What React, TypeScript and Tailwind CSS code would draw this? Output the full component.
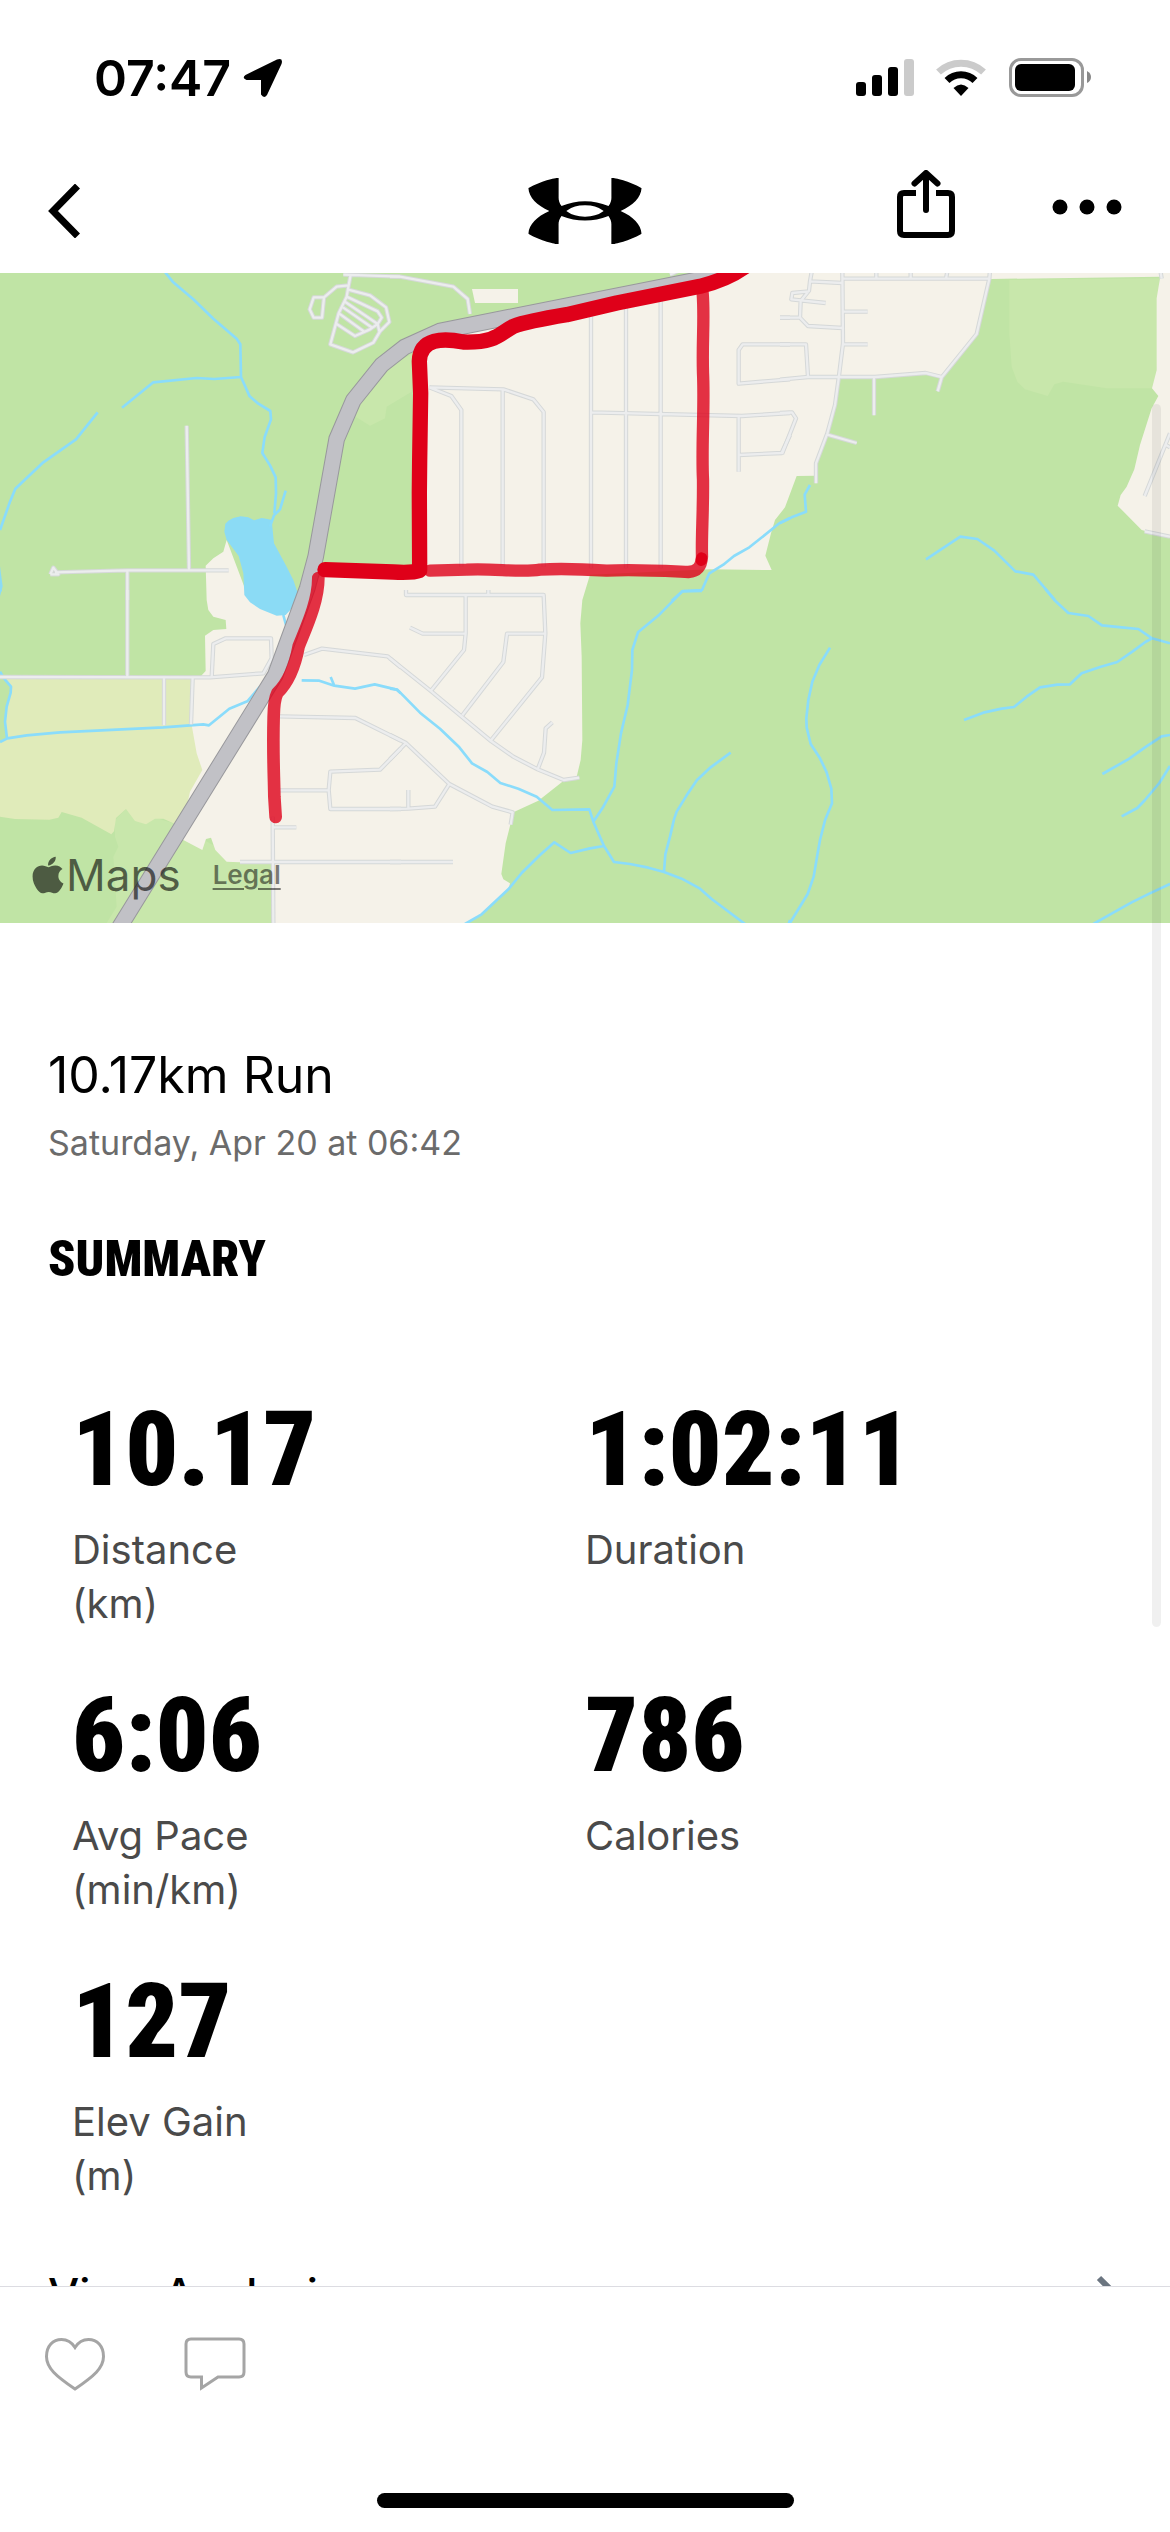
import { SiUnderarmour } from 'react-icons/si'
import { FaApple } from 'react-icons/fa'

const stats = [
  { value: '10.17', label: 'Distance', unit: '(km)' },
  { value: '1:02:11', label: 'Duration' },
  { value: '6:06', label: 'Avg Pace', unit: '(min/km)' },
  { value: '786', label: 'Calories' },
  { value: '127', label: 'Elev Gain', unit: '(m)' },
]

// The map is split into six tiles, each with its own local coordinates
const tiles = [
  {
    x: 0,
    y: -9,
    water:
      'M490,0 L518,35 580,88 640,146 710,206 721,223 723,321 749,379 775,401 811,423 813,448 794,501 787,549 810,586 827,622 828,670 823,730 M857,662 L840,718 822,736 810,770 M723,321 L643,327 590,324 460,337 366,413 M293,427 L228,508 130,577 46,656 30,695 0,780',
    roads:
      'M560,467 L567,900 M151,913 L160,893 175,913 151,913 M165,907 L380,901 686,901 M382,901 L382,990 M1030,14 L1200,20 M1052,14 L1046,46 1010,50 972,82 941,82 929,118 941,143 966,143 972,82 M1046,46 L1040,80 1016,130 991,223 1059,247 1120,218 1140,184 1168,156 1158,112 1110,76 1042,58 M1040,80 L1133,124 1145,143 1133,162 1110,178 1065,198 1010,162 M1036,96 L1133,162 1138,184 M1029,112 L1118,174 M1018,131 L1094,186',
  },
  {
    x: 1170,
    y: -9,
    water: 'M1200,744 L1168,760 1078,832 1032,858 1000,884 958,910 936,960 878,963 845,992',
    roads:
      'M0,20 L30,20 190,50 233,87 240,132 M840,14 L870,0 M118,352 L340,358 430,388 461,426 461,890 M118,352 L184,378 214,420 214,890 M338,358 L338,890 M603,130 L603,895 M708,110 L708,895 M812,90 L812,895 M603,427 L1055,438 1200,429 M1046,438 L1046,605 M1046,555 L1175,549 1200,495 M1200,223 L1058,223 1046,240 1046,341 1200,328 M1170,143 L1200,143',
  },
  {
    x: 2340,
    y: -9,
    water: 'M90,645 L74,674 78,725 35,742 0,759 M438,868 L541,800 592,807 643,842 706,904 760,914 825,990',
    roads:
      'M96,0 L90,34 87,62 62,93 60,143 84,168 187,174 M0,143 L60,143 M90,34 L187,39 M87,64 L37,69 34,88 137,99 M187,0 L189,220 176,325 165,405 142,490 108,580 108,640 M189,26 L628,26 M289,0 L289,26 M392,0 L392,26 M503,0 L498,26 M630,0 L628,26 590,192 485,322 473,364 M189,125 L263,125 M189,223 L263,223 M0,223 L78,223 84,321 M0,329 L84,321 285,321 437,309 485,321 M282,321 L282,436 M142,494 L230,519 M0,429 L36,427 48,445 6,552 M1141,0 L1145,26 M1094,678 L1170,490 M1158,525 L1170,532 M1094,784 L1170,800',
  },
  {
    x: 0,
    y: 951,
    water:
      'M0,456 L22,445 80,436 180,427 490,412 610,403 627,406 688,356 742,334 780,290 M0,245 L12,265 33,290 32,308 20,350 15,395 21,445 M0,0 L3,5 M850,75 L858,105 M905,271 L958,272 1003,287 1065,296 1124,283 1190,299 1202,310 M992,261 L1002,285',
    roads:
      'M382,0 L382,261 M0,261 L630,262 790,250 815,205 813,145 677,145 640,162 635,262 M492,262 L492,406 M578,262 L573,403 M912,195 L966,176 1163,199 1203,233 M840,379 L1066,384 1203,452 M1203,475 L1140,539 991,545 986,600 991,657 1203,657 M840,601 L986,601 M818,680 L820,999 M818,712 L889,712 M720,816 L1203,816',
  },
  {
    x: 1170,
    y: 951,
    water:
      'M0,296 L22,299 90,368 150,416 208,472 246,520 292,546 331,579 385,596 440,620 487,660 598,658 610,695 642,768 672,816 720,822 775,833 822,846 875,866 930,896 965,927 1065,1002 M610,695 L640,650 673,590 679,520 693,430 713,345 721,280 726,240 727,180 744,127 808,74 877,4 936,3 M642,768 L600,775 542,789 493,757 450,795 395,849 355,898 275,973 225,1002 M1022,488 L962,532 921,570 890,616 860,665 852,688 840,740 826,793 822,846 M1195,1005 L1200,990',
    roads:
      'M48,0 L48,15 461,15 466,130 456,262 303,451 M295,0 L295,15 M227,15 L227,130 222,180 124,301 M60,113 L98,131 227,131 M466,131 L351,131 340,216 217,376 M0,205 L124,304 303,453 370,500 443,538 521,570 568,563 M443,538 L462,488 467,415 487,397 M0,435 L48,459 178,582 307,650 368,667 362,704 M48,459 L0,508 M178,582 L135,650 55,656 0,657 M55,600 L55,656 M0,816 L189,816',
  },
  {
    x: 2340,
    y: 951,
    water:
      'M795,-4 L823,30 865,69 925,78 966,106 1025,112 1075,117 1116,145 1170,160 M1116,145 L1096,156 1058,184 1012,216 960,231 905,250 870,283 832,284 780,292 740,320 702,351 665,356 610,368 552,390 M150,173 L118,225 97,275 85,330 79,385 80,412 92,462 120,505 140,547 154,596 156,640 135,691 120,750 112,795 101,860 83,912 28,1002 M967,552 L1048,506 1095,472 1145,439 1170,435 M1025,679 L1072,654 1095,630 1138,579 1170,528 M940,1002 L1000,968 1055,937 1108,911 1170,882',
    roads: '',
  },
]

const highway = 'M354,1970 L826,1206 922,945 947,851 1010,498 1060,382 1145,276 1214,222 1320,174 2160,7'

function RouteMap() {
  return (
    <svg viewBox="0 0 3510 1950" className="block w-full h-auto bg-[#c0e4a5]" role="img" aria-label="Map of the run">
      {/* Parks and fields */}
      <path fill="#c8e7ab" d="M3028,21 L3478,16 3470,291 3456,346 3320,346 3190,326 3163,334 3143,369 3075,349 3052,326 3035,281 3028,181Z" />
      <path fill="#c8e7ab" d="M1050,421 L1110,458 1155,436 1160,401 1235,356 1240,240 1150,290Z" />
      <path fill="#c8e7ab" d="M345,1641 L378,1608 520,1651 700,1750 822,1768 822,1950 320,1950 350,1901 340,1751 355,1721 345,1691Z" />
      <path
        fill="#e0ebba"
        d="M0,1213 L600,1213 620,1500 530,1655 490,1637 465,1637 438,1654 405,1644 378,1608 348,1635 342,1675 334,1684 245,1634 185,1617 175,1634 148,1640 45,1638 0,1631Z"
      />
      <path fill="#c0e4a5" d="M0,1213 L15,1219 33,1241 20,1301 15,1346 20,1396 0,1407Z" />
      {/* Built-up area */}
      <path
        fill="#f5f2e9"
        d="M680,801 L670,836 640,856 617,878 620,981 625,1011 640,1031 677,1041 679,1068 640,1071 615,1088 617,1194 603,1209 580,1213 575,1356 590,1441 607,1491 570,1556 540,1695 550,1701 607,1731 618,1698 633,1694 646,1731 680,1766 720,1768 820,1773 820,1950 1400,1950 1445,1926 1525,1851 1530,1831 1510,1819 1504,1803 1517,1711 1532,1651 1540,1618 1615,1583 1690,1524 1730,1511 1742,1461 1747,1401 1745,1151 1741,1051 1747,981 1770,905 2130,889 2315,891 2296,848 2313,781 2325,741 2355,703 2390,609 2444,608 2448,571 2482,481 2505,396 2515,316 2625,313 2777,302 2825,311 2930,183 2972,18 3480,11 3480,0 2170,0 1400,170 1255,230 1255,900 975,890 900,980 850,1020 740,960Z"
      />
      <path
        fill="#f5f2e9"
        d="M3480,0 L3480,16 3470,76 3470,291 3456,346 3475,369 3455,406 3420,516 3403,589 3380,641 3362,666 3353,698 3425,771 3510,794 3510,0Z"
      />
      <path fill="#f5f2e9" d="M1416,48 L1554,48 1554,90 1425,90Z" />
      {/* Lake */}
      <path
        fill="#8bdbf5"
        d="M676,752 L673,776 680,801 716,849 730,901 733,966 750,988 780,1008 830,1028 857,1026 880,1001 895,965 880,921 860,881 822,811 815,741 803,738 785,735 762,742 745,733 722,730 700,735 685,743Z"
      />
      <path fill="#8bdbf5" d="M0,880 L8,940 0,970Z" />
      <g fill="none" strokeLinejoin="round">
        {tiles.map((tile, i) => (
          <path key={`water-${i}`} transform={`translate(${tile.x} ${tile.y})`} d={tile.water} stroke="#8adcfb" strokeWidth="8" />
        ))}
        {tiles.map((tile, i) => (
          <path key={`casing-${i}`} transform={`translate(${tile.x} ${tile.y})`} d={tile.roads} stroke="#d5d8d8" strokeWidth="13" />
        ))}
        {tiles.map((tile, i) => (
          <path key={`road-${i}`} transform={`translate(${tile.x} ${tile.y})`} d={tile.roads} stroke="#ecedee" strokeWidth="7" />
        ))}
        <path d={highway} stroke="#98989c" strokeWidth="50" strokeLinejoin="miter" />
        <path d={highway} stroke="#c1c1c6" strokeWidth="44" strokeLinejoin="miter" />
        {/* Recorded route */}
        <path
          stroke="#df0019"
          strokeOpacity="0.8"
          strokeWidth="37"
          strokeLinecap="round"
          d="M2108,60 C2114,140 2106,200 2109,300 C2114,400 2104,520 2109,620 C2110,720 2104,790 2106,850 C2104,885 2090,895 2065,897 C2000,894 1900,888 1820,893 C1740,888 1690,885 1620,890 C1560,900 1480,885 1400,890 L1290,893"
        />
        <path
          stroke="#df0019"
          strokeOpacity="0.8"
          strokeWidth="38"
          strokeLinecap="round"
          d="M955,915 C955,985 920,1060 896,1120 C885,1180 868,1225 832,1260 Q822,1280 821,1330 C818,1440 822,1500 823,1570 L827,1632"
        />
        <path
          stroke="#df0019"
          strokeWidth="46"
          strokeLinecap="round"
          strokeLinejoin="round"
          d="M2250,-30 Q2190,18 2100,40 L1850,90 1700,125 Q1580,145 1540,160 C1500,180 1490,210 1390,207 C1330,195 1260,195 1258,265 L1262,360 1259,560 1258,660 1259,892 Q1240,900 1180,897 L975,890"
        />
        <path stroke="#df0019" strokeWidth="34" strokeLinecap="round" d="M2105,855 L2104,862" />
      </g>
    </svg>
  )
}

function StatusIcons() {
  return (
    <svg width="236" height="40" viewBox="0 0 236 40" aria-hidden="true">
      <rect x="0" y="24" width="10" height="14" rx="3" />
      <rect x="16" y="17" width="10" height="21" rx="3" />
      <rect x="32" y="9" width="10" height="29" rx="3" />
      <rect x="48" y="1" width="10" height="37" rx="3" fill="#cbcbcb" />
      <path d="M82.500 14 A33 33 0 0 1 127.500 14" fill="none" stroke="#cbcbcb" strokeWidth="7" />
      <path d="M91 22.500 A20 20 0 0 1 119 22.500" fill="none" stroke="#000" strokeWidth="7" />
      <path d="M105 38 L97.500 30 Q105 23 112.500 30Z" />
      <rect x="154.500" y="1.500" width="72" height="36" rx="10.500" fill="none" stroke="#999" strokeWidth="3" />
      <rect x="159" y="6" width="60" height="27" rx="6" />
      <path d="M231 13 Q235 15 235 19 T231 25Z" fill="#888" />
    </svg>
  )
}

export default function App() {
  return (
    <div className="relative flex h-screen flex-col overflow-hidden bg-white font-['Inter',sans-serif] text-black">
      <div className="flex shrink-0 items-center justify-between pt-12 pr-[78px] pb-12 pl-[94px]">
        <div className="flex items-center gap-3 text-[50px] leading-[60px] font-semibold">
          <span>07:47</span>
          <svg width="40" height="40" viewBox="0 0 40 40" aria-hidden="true">
            <path d="M2.500 17 L34 1.500 Q40.500 -0.500 38.500 6 L24 37 Q21 41 18 36.500 V22 H3.500 Q-1.500 20 2.500 17Z" />
          </svg>
        </div>
        <StatusIcons />
      </div>

      <header className="grid shrink-0 grid-cols-3 items-center px-12 pt-[14px] pb-[21px]">
        <button aria-label="Back" className="justify-self-start">
          <svg width="34" height="54" viewBox="0 0 34 54" fill="none" stroke="#000" strokeWidth="7">
            <path d="M29.500 2 L5 27 L29.500 52" />
          </svg>
        </button>
        <SiUnderarmour viewBox="0 5 24 14" className="h-[66px] w-[114px] justify-self-center" aria-label="Under Armour" />
        <div className="flex items-center justify-end gap-24">
          <button aria-label="Share" className="pb-3">
            <svg width="60" height="70" viewBox="0 0 60 70" fill="none" stroke="#000" strokeWidth="6" strokeLinecap="round" strokeLinejoin="round">
              <path d="M20 23 H8 Q4 23 4 27 V61 Q4 65 8 65 H52 Q56 65 56 61 V27 Q56 23 52 23 H40" strokeLinecap="butt" />
              <path d="M30 40 V4 M18.500 13.500 L30 3 L41.500 13.500" />
            </svg>
          </button>
          <button aria-label="More options" className="pb-2">
            <svg width="70" height="16" viewBox="0 0 70 16">
              <circle cx="8" cy="8" r="7.500" />
              <circle cx="35" cy="8" r="7.500" />
              <circle cx="62" cy="8" r="7.500" />
            </svg>
          </button>
        </div>
      </header>

      <main className="min-h-0 flex-1 overflow-hidden">
        <div className="relative">
          <RouteMap />
          <div className="absolute bottom-5 left-8 flex items-center gap-8 text-black/60">
            <div className="flex items-center gap-0.5 text-[44px] leading-[56px]">
              <FaApple className="h-[42px] w-8" />
              <span>Maps</span>
            </div>
            <a href="#legal" className="text-[26px] leading-8 font-semibold text-black/50 underline underline-offset-4">Legal</a>
          </div>
        </div>

        <section className="px-12 pt-[122px]">
          <h1 className="text-[50px] leading-[60px]">10.17km Run</h1>
          <p className="mt-2 text-[34px] leading-[60px] text-[#6b6b6b]">Saturday, Apr 20 at 06:42</p>
          <h2 className="mt-14 font-['Roboto_Condensed','Liberation_Sans_Narrow',sans-serif] text-[50px] leading-[60px] font-black">SUMMARY</h2>
          <dl className="mt-24 grid grid-cols-2 px-6">
            {stats.map(stat => (
              <div key={stat.label} className="flex h-[286px] flex-col-reverse justify-end">
                <dt className="pt-2 text-[40px] leading-[54px] text-[#4a4a4a]">
                  {stat.label}
                  {stat.unit && <span className="block">{stat.unit}</span>}
                </dt>
                <dd className="font-['Roboto_Condensed','Liberation_Sans_Narrow',sans-serif] text-[104px] leading-[130px] font-black">{stat.value}</dd>
              </div>
            ))}
          </dl>
          <a href="#analysis" className="mt-6 flex items-center justify-between text-[44px] leading-[54px] font-medium">
            View Analysis
            <svg width="26" height="44" viewBox="0 0 26 44" fill="none" stroke="#6b7580" strokeWidth="6">
              <path d="M3 6 L19 22 L3 38" />
            </svg>
          </a>
        </section>
      </main>

      <footer className="flex shrink-0 flex-col border-t border-[#dcdce2] bg-white pt-[50px] pb-6">
        <div className="flex gap-[78px] px-11">
          <button aria-label="Like">
            <svg width="62" height="54" viewBox="0 0 62 54" fill="none" stroke="#a5a5a5" strokeWidth="3">
              <path d="M31 52 C12 39 2.500 31 2.500 19.500 C2.500 9 9 2.500 17.500 2.500 Q26 2.500 31 10.500 Q36 2.500 44.500 2.500 C53 2.500 59.500 9 59.500 19.500 C59.500 31 50 39 31 52Z" />
            </svg>
          </button>
          <button aria-label="Comment">
            <svg width="62" height="54" viewBox="0 0 62 54" fill="none" stroke="#a5a5a5" strokeWidth="3">
              <path d="M7 2 H55 Q60 2 60 7 V35 Q60 40 55 40 H34 L17.500 51 V40 H7 Q2 40 2 35 V7 Q2 2 7 2Z" />
            </svg>
          </button>
        </div>
        <div className="mx-auto mt-[102px] h-[15px] w-[417px] max-w-full rounded-full bg-black" />
      </footer>

      {/* Scroll indicator */}
      <div className="absolute top-[404px] right-[9px] h-[1223px] w-[9px] rounded-full bg-black/[0.06]" />
    </div>
  )
}
